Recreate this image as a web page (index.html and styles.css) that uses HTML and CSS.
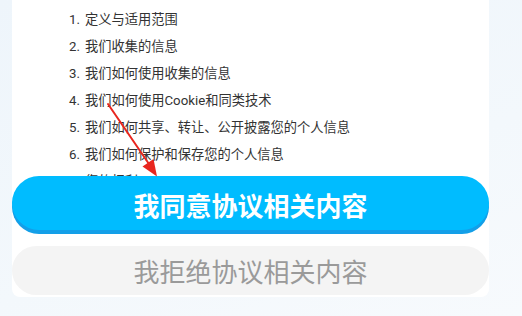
FILE: index.html
```html
<!DOCTYPE html>
<html lang="zh-CN">
<head>
<meta charset="utf-8">
<title>协议</title>
<link rel="stylesheet" href="styles.css">
</head>
<body>
<div class="card">
  <ol class="list">
    <li><span class="num">1.</span>定义与适用范围</li>
    <li><span class="num">2.</span>我们收集的信息</li>
    <li><span class="num">3.</span>我们如何使用收集的信息</li>
    <li><span class="num">4.</span>我们如何使用Cookie和同类技术</li>
    <li><span class="num">5.</span>我们如何共享、转让、公开披露您的个人信息</li>
    <li><span class="num">6.</span>我们如何保护和保存您的个人信息</li>
    <li><span class="num">7.</span>您的权利</li>
  </ol>
  <div class="actions">
    <button class="btn agree">我同意协议相关内容</button>
    <button class="btn refuse">我拒绝协议相关内容</button>
  </div>
  <svg class="arrow" width="477" height="297" viewBox="0 0 477 297">
    <line x1="96" y1="104" x2="137" y2="164" stroke="#e8261f" stroke-width="2" stroke-linecap="round"/>
    <polygon points="145,176.5 130.5,166.5 141.5,159" fill="#e8261f"/>
  </svg>
</div>
</body>
</html>
```
FILE: styles.css
```css
html, body {
  margin: 0;
  padding: 0;
}
body {
  width: 522px;
  height: 316px;
  overflow: hidden;
  background: linear-gradient(160deg, #eef5fb 0%, #f3f8fc 60%, #f7fafd 100%);
  font-family: "Roboto", "Noto Sans CJK SC", sans-serif;
}
.card {
  position: relative;
  margin-left: 12px;
  width: 477px;
  height: 297px;
  background: #fff;
  border-radius: 0 0 8px 8px;
  display: flex;
  flex-direction: column;
}
.list {
  list-style: none;
  margin: 0;
  padding: 6px 0 0 57px;
  height: 176px;
  box-sizing: border-box;
  overflow: hidden;
  flex: none;
}
.list li {
  display: flex;
  height: 27px;
  line-height: 27px;
  font-size: 13.25px;
  color: #333;
  white-space: nowrap;
}
.num {
  width: 16px;
  flex: none;
}
.actions {
  display: flex;
  flex-direction: column;
}
.btn {
  border: 0;
  margin: 0;
  padding: 0;
  width: 477px;
  font-family: "Noto Sans CJK SC", sans-serif;
  font-size: 26px;
  letter-spacing: 0;
  display: flex;
  align-items: center;
  justify-content: center;
}
.agree {
  height: 54px;
  border-radius: 27px;
  background: #00bcff;
  color: #fff;
  font-weight: 700;
  box-shadow: 0 4px 0 #139fe8;
  margin-bottom: 16px;
  padding-top: 3px;
}
.refuse {
  height: 49px;
  border-radius: 25px;
  background: #f4f4f4;
  color: #9a9a9a;
  font-weight: 400;
}
.arrow {
  position: absolute;
  left: 0;
  top: 0;
  pointer-events: none;
}
```
